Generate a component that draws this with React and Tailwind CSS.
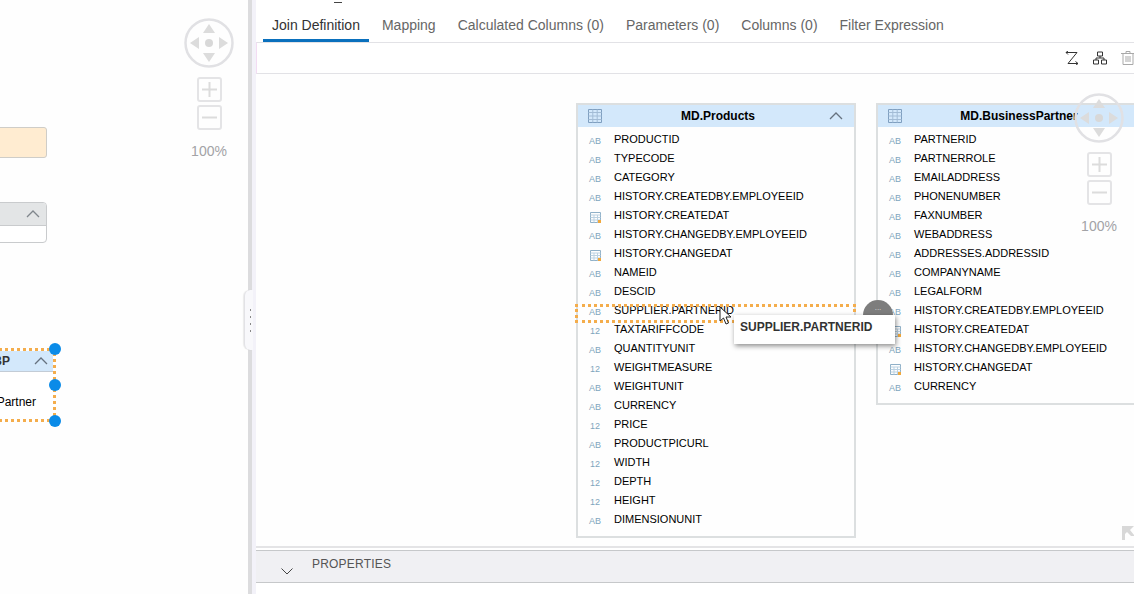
import React from "react";

const products = [
  ["PRODUCTID", "a"],
  ["TYPECODE", "a"],
  ["CATEGORY", "a"],
  ["HISTORY.CREATEDBY.EMPLOYEEID", "a"],
  ["HISTORY.CREATEDAT", "d"],
  ["HISTORY.CHANGEDBY.EMPLOYEEID", "a"],
  ["HISTORY.CHANGEDAT", "d"],
  ["NAMEID", "a"],
  ["DESCID", "a"],
  ["SUPPLIER.PARTNERID", "a"],
  ["TAXTARIFFCODE", "n"],
  ["QUANTITYUNIT", "a"],
  ["WEIGHTMEASURE", "n"],
  ["WEIGHTUNIT", "a"],
  ["CURRENCY", "a"],
  ["PRICE", "n"],
  ["PRODUCTPICURL", "a"],
  ["WIDTH", "n"],
  ["DEPTH", "n"],
  ["HEIGHT", "n"],
  ["DIMENSIONUNIT", "a"],
];

const partners = [
  ["PARTNERID", "a"],
  ["PARTNERROLE", "a"],
  ["EMAILADDRESS", "a"],
  ["PHONENUMBER", "a"],
  ["FAXNUMBER", "a"],
  ["WEBADDRESS", "a"],
  ["ADDRESSES.ADDRESSID", "a"],
  ["COMPANYNAME", "a"],
  ["LEGALFORM", "a"],
  ["HISTORY.CREATEDBY.EMPLOYEEID", "a"],
  ["HISTORY.CREATEDAT", "d"],
  ["HISTORY.CHANGEDBY.EMPLOYEEID", "a"],
  ["HISTORY.CHANGEDAT", "d"],
  ["CURRENCY", "a"],
];

const tabs = [
  "Join Definition",
  "Mapping",
  "Calculated Columns (0)",
  "Parameters (0)",
  "Columns (0)",
  "Filter Expression",
];

function TableIcon() {
  return (
    <svg width="14" height="14" viewBox="0 0 14 14" fill="none" stroke="#7f9fc0" strokeWidth="1">
      <path d="M.5.5h13v13H.5z" />
      <path d="M.5 3.5h13M.5 7h13M.5 10.5h13M4.800 .5v13M9.200 .5v13" stroke="#a3bcd6" />
    </svg>
  );
}

function DateIcon() {
  return (
    <svg width="11" height="11" viewBox="0 0 11 11" fill="none">
      <path d="M.5.5h10v10H.5z" stroke="#8fb0c8" />
      <path d="M.5 3h10M.5 5.500h10M.5 8h10M4 3v7.500M7.500 3v7.500" stroke="#bcd2e2" />
      <rect x="8" y="8" width="3" height="3" fill="#f0a83c" />
    </svg>
  );
}

function Chevron({ color = "#66727f" }) {
  return (
    <svg width="14" height="8" viewBox="0 0 14 8" fill="none" stroke={color} strokeWidth="1.3">
      <path d="M1 7l6-6 6 6" />
    </svg>
  );
}

function FieldRow({ name, type }) {
  return (
    <div className="flex h-[19px] items-center">
      <div className="flex w-[36px] justify-center pr-[2px] pt-[4px]">
        {type === "d" ? (
          <DateIcon />
        ) : (
          <span className="text-[9px] leading-none text-[#7fa5bd]">
            {type === "a" ? "AB" : "12"}
          </span>
        )}
      </div>
      <span className="text-[11px] text-black">{name}</span>
    </div>
  );
}

function TableCard({ title, fields, className, titleClass = "" }) {
  return (
    <div className={`absolute flex flex-col border-2 border-[#dcdfe0] bg-[#fefefe] ${className}`}>
      <div className="flex h-[22px] shrink-0 items-center justify-between bg-[#d3e8fb] pl-[10px] pr-[11px]">
        <TableIcon />
        <span className={`text-[12px] font-bold text-black ${titleClass}`}>{title}</span>
        <Chevron />
      </div>
      <div className="flex flex-col pt-[3px]">
        {fields.map(([name, type]) => (
          <FieldRow key={name} name={name} type={type} />
        ))}
      </div>
    </div>
  );
}

function Navigator({ className }) {
  return (
    <div className={`absolute flex w-[50px] flex-col items-center ${className}`}>
      <svg width="50" height="50" viewBox="0 0 50 50">
        <circle cx="25" cy="25" r="23.500" fill="none" stroke="#e1e1e4" strokeWidth="2.500" />
        <path d="M25 6l6 9H19zM25 44l-6-9h12zM6 25l9-6v12zM44 25l-9 6V19z" fill="#dcdcdc" />
        <circle cx="25" cy="25" r="4" fill="#d8d8d8" />
      </svg>
      <div className="mt-[9px] flex h-[25px] w-[25px] items-center justify-center rounded-[3px] border-2 border-[#e4e4e6]">
        <svg width="15" height="15" viewBox="0 0 15 15" stroke="#dcdcdc" strokeWidth="2">
          <path d="M7.500 0v15M0 7.500h15" />
        </svg>
      </div>
      <div className="mt-[3px] flex h-[25px] w-[25px] items-center justify-center rounded-[3px] border-2 border-[#e4e4e6]">
        <svg width="15" height="3" viewBox="0 0 15 3" stroke="#dcdcdc" strokeWidth="2">
          <path d="M0 1.500h15" />
        </svg>
      </div>
      <span className="mt-[13px] text-[14px] leading-[16px] text-[#a3a3a6]">100%</span>
    </div>
  );
}

function LeftPane() {
  return (
    <div className="relative h-full w-[248px] shrink-0 overflow-hidden bg-[#fefefe]">
      <div className="absolute left-[-20px] top-[127px] h-[31px] w-[67px] rounded-[3px] border border-[#cfcdc8] bg-[#ffecd1]" />

      <div className="absolute left-[-20px] top-[202px] h-[41px] w-[67px] overflow-hidden rounded-[4px] border border-[#c9cbcd] bg-white">
        <div className="flex h-[23px] items-center justify-end border-b border-[#c9cbcd] bg-[#e3e5e6] pr-[6px]">
          <Chevron color="#80868c" />
        </div>
      </div>

      <div className="absolute left-[-20px] top-[348px] h-[74px] w-[76px] border-[3px] border-dotted border-[#f4ad4c] bg-white">
        <div className="flex h-[21px] items-center justify-end gap-[24px] border-b border-[#c3ccd6] bg-[#d3e8fb] pr-[5px]">
          <span className="text-[12px] font-bold text-[#333]">BP</span>
          <Chevron />
        </div>
        <div className="mt-[22px] pr-[17px] text-right text-[12px] leading-[16px] text-black">Partner</div>
      </div>
      <div className="absolute left-[49px] top-[343px] h-[12px] w-[12px] rounded-full bg-[#0a8be8]" />
      <div className="absolute left-[49px] top-[379px] h-[12px] w-[12px] rounded-full bg-[#0a8be8]" />
      <div className="absolute left-[49px] top-[415px] h-[12px] w-[12px] rounded-full bg-[#0a8be8]" />

      <Navigator className="left-[184px] top-[18px]" />
    </div>
  );
}

function Divider() {
  return (
    <div className="relative flex h-full w-[8px] shrink-0">
      <div className="w-[4px] bg-[#dcdcde]" />
      <div className="w-[4px] bg-[#f3f2f9]" />
      <div className="absolute left-[-4px] top-[290px] flex h-[60px] w-[9px] flex-col items-center justify-center gap-[5px] rounded-l-[6px] border-l border-[#e2e2e6] bg-[#f8f8fb] pl-[3px] shadow-[-1px_0_1px_rgba(0,0,0,0.08)]">
        <div className="h-[2px] w-[1px] bg-[#888]" />
        <div className="h-[2px] w-[1px] bg-[#888]" />
        <div className="h-[2px] w-[1px] bg-[#888]" />
        <div className="h-[2px] w-[1px] bg-[#888]" />
      </div>
    </div>
  );
}

function Tabs() {
  return (
    <div className="relative flex h-[42px] shrink-0 items-end pl-[7px]">
      <div className="absolute left-[78px] top-[2px] h-[1px] w-[8px] bg-[#444]" />
      {tabs.map((tab, i) => (
        <div
          key={tab}
          className={`flex h-[41px] items-center border-b-[3px] px-[9px] pt-[11px] mr-[4px] text-[14px] ${
            i === 0 ? "border-[#0a70bd] text-[#333]" : "border-transparent text-[#666]"
          }`}
        >
          {tab}
        </div>
      ))}
    </div>
  );
}

function Toolbar() {
  return (
    <div className="flex h-[32px] shrink-0 items-center justify-end gap-[14px] border-y border-l border-y-[#e2e2e6] border-l-[#f3dcf3] bg-white pr-0">
      <svg width="14" height="14" viewBox="0 0 14 14" fill="none" stroke="#333" strokeWidth="1">
        <path d="M1 1.500h11L3 12.500h10M10.500 10.500l2.500 2-2.500 2M3 0L1 1.500 3 3.500" />
      </svg>
      <svg width="14" height="14" viewBox="0 0 14 14" fill="none" stroke="#333" strokeWidth="1">
        <path d="M4.500 1h5v4h-5zM.5 9h5v4h-5zM8.500 9h5v4h-5zM7 5v2M3 9V7h8v2" />
      </svg>
      <div className="w-[13px] overflow-hidden">
        <svg width="14" height="14" viewBox="0 0 14 14" fill="none" stroke="#a9a9a9" strokeWidth="1">
          <path d="M0 2.500h14M5 2.500V.5h4v2M2 2.500V13.500h10V2.500M5 5v6M7 5v6M9 5v6" />
        </svg>
      </div>
    </div>
  );
}

function Canvas() {
  return (
    <div className="relative flex-1 overflow-hidden bg-[#fefefe]">
      <TableCard
        title="MD.Products"
        fields={products}
        titleClass="pl-[5px]"
        className="left-[320px] top-[29px] h-[435px] w-[280px]"
      />
      <TableCard title="MD.BusinessPartner" fields={partners} className="left-[620px] top-[29px] h-[302px] w-[287px]" />

      {/* link handle, sits behind the tooltip */}
      <div className="absolute left-[607px] top-[226px] flex h-[30px] w-[30px] justify-center rounded-full bg-[#7d7d7d] pt-[4px] text-[8px] leading-none text-[#ddd]">
        ...
      </div>

      <div className="absolute left-[319px] top-[230px] h-[19px] w-[281px] border-[3px] border-dotted border-[#f4ad4c]" />

      <Navigator className="left-[818px] top-[19px]" />

      <div className="absolute left-[478px] top-[241px] flex h-[29px] w-[161px] items-center bg-white pb-[5px] pl-[6px] text-[12px] font-bold text-[#333] shadow-[1px_2px_5px_rgba(0,0,0,0.45)]">
        SUPPLIER.PARTNERID
      </div>

      {/* mouse pointer */}
      <svg className="absolute left-[463px] top-[232px]" width="14" height="20" viewBox="0 0 14 20">
        <path d="M1 1v14l3.500-3 2.500 6 2.500-1-2.500-6h5z" fill="#fff" stroke="#222" strokeWidth="1" />
      </svg>

      {/* expand corner */}
      <svg className="absolute left-[866px] top-[452px]" width="12" height="14" viewBox="0 0 12 14">
        <path d="M0 0h12L8 4l4 5v1H9L5 6 3 8v6H0z" fill="#d8d8d8" />
      </svg>
    </div>
  );
}

function Properties() {
  return (
    <div className="flex h-[48px] shrink-0 flex-col border-t-2 border-[#e4e4e6] bg-white pt-[2px]">
      <div className="flex h-[33px] shrink-0 items-center border-y border-[#c6c8ca] bg-[#f0f0f3]">
        <div className="flex w-[56px] justify-center pl-[6px] pt-[9px]">
          <svg width="12" height="7" viewBox="0 0 12 7" fill="none" stroke="#444" strokeWidth="1">
            <path d="M.5.5L6 6 11.500.5" />
          </svg>
        </div>
        <span className="pb-[6px] text-[12px] tracking-[0.2px] text-[#555]">PROPERTIES</span>
      </div>
    </div>
  );
}

export default function App() {
  return (
    <div
      className="flex h-[594px] w-[1134px] overflow-hidden bg-white"
      style={{ fontFamily: '"Liberation Sans", Arial, sans-serif' }}
    >
      <LeftPane />
      <Divider />
      <div className="flex h-full min-w-0 flex-1 flex-col">
        <Tabs />
        <Toolbar />
        <Canvas />
        <Properties />
      </div>
    </div>
  );
}
